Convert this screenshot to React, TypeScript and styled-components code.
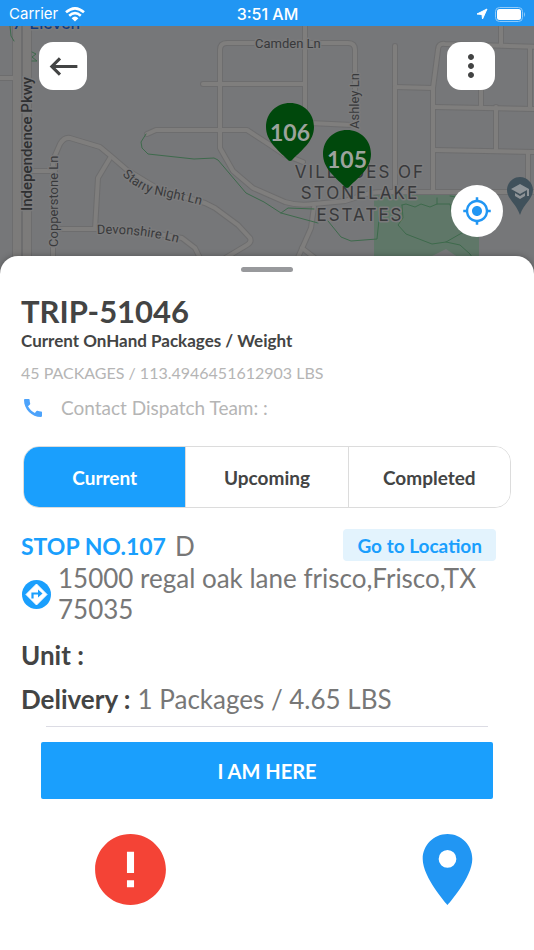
import React, { useState } from "react";
import styled, { createGlobalStyle } from "styled-components";
import {
  MdCall,
  MdError,
  MdKeyboardBackspace,
  MdLocationOn,
  MdMoreVert,
  MdMyLocation,
} from "react-icons/md";

const BLUE = "#1a9ffd";
const INK = "#434444";

const GlobalStyle = createGlobalStyle`
  *, *::before, *::after { box-sizing: border-box; }
  body { margin: 0; background: #fff; font-family: Lato, sans-serif; color: ${INK}; }
  h1, h2, p, dl, dd, dt { margin: 0; }
  button { border: 0; padding: 0; font: inherit; color: inherit; cursor: pointer; }
`;

const Screen = styled.div`
  display: flex;
  flex-direction: column;
  min-height: 100vh;
  background: #fff;
`;

const StatusBar = styled.header`
  display: grid;
  grid-template-columns: 1fr auto 1fr;
  align-items: center;
  height: 26px;
  padding: 2px 8px 0 9px;
  background: #2196f3;
  color: #fff;
  font: 400 15px/24px Inter, sans-serif;
`;

const StatusGroup = styled.div<{ $end?: boolean }>`
  display: flex;
  align-items: center;
  gap: 7px;
  justify-content: ${(p) => (p.$end ? "flex-end" : "flex-start")};
`;

const Clock = styled.time`
  font-size: 16px;
  font-weight: 500;
`;

const MapArea = styled.section`
  position: relative;
  height: 250px;
  background: #767779;
  overflow: hidden;
`;

const MapDrawing = styled.svg`
  position: absolute;
  inset: 0;
  width: 100%;
  height: 100%;
`;

const MapControls = styled.div`
  position: relative;
  display: flex;
  justify-content: space-between;
  padding: 16px 39px;
`;

const SquareButton = styled.button`
  display: grid;
  place-items: center;
  width: 48px;
  height: 48px;
  border-radius: 14px;
  background: #fff;
  color: ${INK};
`;

const LocateButton = styled.button`
  position: absolute;
  right: 31px;
  bottom: 39px;
  display: grid;
  place-items: center;
  width: 52px;
  height: 52px;
  border-radius: 50%;
  background: #fff;
  color: #2196f3;
`;

const Sheet = styled.main`
  position: relative;
  flex: 1;
  display: flex;
  flex-direction: column;
  margin-top: -20px;
  padding: 11px 21px 36px;
  border-radius: 18px 18px 0 0;
  background: #fff;
  box-shadow: 0 0 6px rgba(0, 0, 0, 0.3);
`;

const Handle = styled.div`
  align-self: center;
  width: 52px;
  height: 5px;
  border-radius: 3px;
  background: #98999c;
`;

const Title = styled.h1`
  margin-top: 21px;
  font-size: 31px;
  font-weight: 700;
  line-height: 36px;
`;

const Subtitle = styled.h2`
  margin-top: 1px;
  font-size: 17px;
  font-weight: 700;
  line-height: 22px;
`;

const Totals = styled.p`
  margin-top: 9px;
  font-size: 16px;
  line-height: 24px;
  color: #b5b5b5;
`;

const Contact = styled.p`
  display: flex;
  align-items: center;
  gap: 16px;
  margin-top: 11px;
  font-size: 19px;
  line-height: 24px;
  color: #b5b5b5;

  svg { color: #4da3fb; }
`;

const Tabs = styled.div`
  display: flex;
  height: 62px;
  margin: 26px 2px 0;
  border: 1px solid #dcdcdc;
  border-radius: 16px;
  overflow: hidden;
`;

const Tab = styled.button<{ $active: boolean }>`
  flex: 1;
  background: ${(p) => (p.$active ? BLUE : "#fff")};
  color: ${(p) => (p.$active ? "#fff" : INK)};
  font-size: 19px;
  font-weight: 700;

  & + & { border-left: 1px solid #dcdcdc; }
`;

const StopRow = styled.div`
  display: flex;
  align-items: center;
  gap: 9px;
  margin: 21px 17px 0 0;
  height: 34px;
`;

const StopName = styled.strong`
  color: ${BLUE};
  font-size: 23px;
  font-weight: 700;
`;

const StopKind = styled.span`
  flex: 1;
  font-size: 26px;
  color: #777;
`;

const GoButton = styled.button`
  align-self: flex-start;
  height: 32px;
  padding: 0 14px;
  border-radius: 4px;
  background: #e3f3fd;
  color: ${BLUE};
  font-size: 19px;
  font-weight: 700;
`;

const Address = styled.div`
  display: flex;
  align-items: center;
  gap: 7px;
  padding-left: 1px;
  font-size: 26px;
  line-height: 31px;
  color: #777;

  svg { flex: none; }
`;

const Details = styled.dl`
  display: flex;
  flex-direction: column;
  gap: 12px;
  margin-top: 14px;
  font-size: 26px;
  line-height: 32px;
`;

const Detail = styled.div`
  display: flex;
  gap: 7px;

  dt { font-weight: 700; }
  dd { color: #777; }
`;

const Divider = styled.hr`
  align-self: stretch;
  height: 1px;
  margin: 11px 25px 0;
  border: 0;
  background: #dcdce4;
`;

const PrimaryButton = styled.button`
  height: 57px;
  margin: 15px 20px 0;
  border-radius: 2px;
  background: ${BLUE};
  color: #fff;
  font-size: 20px;
  font-weight: 700;
`;

const Actions = styled.div`
  display: flex;
  justify-content: space-between;
  margin-top: 28px;
  padding: 0 23px 0 67px;
`;

const IconButton = styled.button<{ $color: string }>`
  display: grid;
  background: none;
  color: ${(p) => p.$color};
`;

const MapLabel = styled.text`
  font: 400 13px Roboto, sans-serif;
  fill: #38393b;
  stroke: #7b7b7c;
  stroke-width: 3px;
  stroke-linejoin: round;
  paint-order: stroke;
`;

const AvenueLabel = styled(MapLabel)`
  font-size: 15px;
  font-weight: 500;
  fill: #2f3032;
`;

const ShopLabel = styled(MapLabel)`
  font: 500 16px Inter, sans-serif;
  fill: #123a7c;
`;

const DistrictLabel = styled(MapLabel)`
  font: 400 17px Inter, sans-serif;
  letter-spacing: 2px;
`;

const PinNumber = styled.text`
  font: 700 23px Lato, sans-serif;
  fill: #9da39d;
`;

const ROADS = [
  "M0 78H16",
  "M31 171H55",
  "M220 130V50Q220 43 227 43H348Q355 43 355 50V124",
  "M203 84H305",
  "M305 20V112L310 123L352 125",
  "M147 134L156 130H247L267 143L285 155L303 162",
  "M220 130V148L233 171L253 188L285 202Q298 206 314 204L345 201L370 193Q376 192 384 192H540",
  "M395 46V192",
  "M395 87L433 88",
  "M540 47L445 44Q438 43 438 50L433 88V192",
  "M501 20V45",
  "M481 46V107",
  "M434 107L540 109",
  "M496 107V150",
  "M434 150L540 152",
  "M530 48V107",
  "M528 152V192",
  "M314 207L311 228L296 262",
  "M302 248L320 262",
  "M53 262V160L60 144Q64 137 70 138L100 147L112 157L127 170L160 190L205 203L215 208L238 225L250 238Q252 242 247 245L222 260",
  "M110 158L98 178L95 229",
  "M53 229H95L135 230L182 238L195 248L202 262",
];

const TRAILS = [
  "M10 26L11 36L14 41M32 52L36 54L32 57L37 61H32",
  "M146 134L141 142L142 148L148 154L194 159L214 158L218 160L246 193L264 202L281 213L318 223",
  "M281 213L288 208L314 209M328 221L341 237L351 241L377 239L380 210",
  "M402 205L406 204L415 207L421 204L430 207L437 204H450L452 214",
  "M402 205L403 218L398 225L406 234L432 244L446 242L460 234L472 228",
  "M446 242L460 245L470 254L474 260",
  "M437 198V204M450 196L462 198",
];

function MapPin({ x, y, label }: { x: number; y: number; label: string }) {
  return (
    <g transform={`translate(${x} ${y})`}>
      <path
        d="M0 0C-13.500 0-24 10-24 24C-24 38-12 47-3 56Q0 60 3 56C12 47 24 38 24 24C24 10 13.500 0 0 0Z"
        fill="#00480c"
      />
      <PinNumber x="0" y="38" textAnchor="middle">
        {label}
      </PinNumber>
    </g>
  );
}

function StreetMap() {
  return (
    <MapDrawing viewBox="0 26 534 250" preserveAspectRatio="xMidYMid slice" aria-label="Street map">
      <rect x="-400" y="0" width="1400" height="400" fill="#767779" />
      <path d="M374 194H479V280H374Z" fill="#5f7768" />
      <path d="M428 258L446 249L462 260Z" fill="#767779" />
      <g fill="none" strokeLinecap="round" strokeLinejoin="round">
        {ROADS.map((d) => (
          <path key={d} d={d} stroke="#6d6d6e" strokeWidth="6" />
        ))}
        <path d="M17 20V280M27 20V280" stroke="#6d6d6e" strokeWidth="10" />
        {ROADS.map((d) => (
          <path key={d} d={d} stroke="#7f7e7d" strokeWidth="4" />
        ))}
        <path d="M17 20V280M27 20V280" stroke="#7c7b7a" strokeWidth="8" />
        {TRAILS.map((d) => (
          <path key={d} d={d} stroke="#3e6a4c" strokeWidth="1" />
        ))}
      </g>
      <defs>
        <path id="starry" d="M122 175Q138 191 158 195T212 208" />
        <path id="devonshire" d="M97 234Q140 232 186 245" />
      </defs>
      <ShopLabel x="13" y="29">7-Eleven</ShopLabel>
      <MapLabel x="255" y="48">Camden Ln</MapLabel>
      <MapLabel transform="translate(359 129) rotate(-90)">Ashley Ln</MapLabel>
      <AvenueLabel transform="translate(32 211) rotate(-90)">Independence Pkwy</AvenueLabel>
      <MapLabel transform="translate(58 247) rotate(-90)">Copperstone Ln</MapLabel>
      <MapLabel>
        <textPath href="#starry">Starry Night Ln</textPath>
      </MapLabel>
      <MapLabel>
        <textPath href="#devonshire">Devonshire Ln</textPath>
      </MapLabel>
      <DistrictLabel x="360" y="178" textAnchor="middle">VILLAGES OF</DistrictLabel>
      <DistrictLabel x="360" y="199" textAnchor="middle">STONELAKE</DistrictLabel>
      <DistrictLabel x="360" y="221" textAnchor="middle">ESTATES</DistrictLabel>
      <MapPin x={290} y={103} label="106" />
      <MapPin x={347} y={130} label="105" />
      <g transform="translate(520 177)">
        <path d="M0 0C-7 0-13 6-13 13C-13 22-4 26 0 38C4 26 13 22 13 13C13 6 7 0 0 0Z" fill="#40515b" />
        <path d="M0 7L-9 12L0 17L7 13V19H9V12ZM-5 16V19L0 22L5 19V16L0 19Z" fill="#8e9498" />
      </g>
    </MapDrawing>
  );
}

function WifiIcon() {
  return (
    <svg width="20" height="15" viewBox="0 0 20 15" fill="none" stroke="#fff" strokeWidth="2.600" aria-hidden="true">
      <path d="M1 5.300Q10-2.600 19 5.300M4.200 8.700Q10 3.700 15.800 8.700" />
      <path d="M6.600 11.200Q10 8 13.400 11.200L10 14.600Z" fill="#fff" stroke="none" />
    </svg>
  );
}

function LocationArrow() {
  return (
    <svg width="12" height="12" viewBox="0 0 12 12" fill="#fff" stroke="#fff" strokeLinejoin="round" aria-hidden="true">
      <path d="M11 1L1 6L6 6.500L6.500 11Z" />
    </svg>
  );
}

function BatteryIcon() {
  return (
    <svg width="31" height="15" viewBox="0 0 31 15" aria-hidden="true">
      <rect x="0.500" y="0.500" width="27" height="14" rx="4" fill="none" stroke="#90cbf9" />
      <rect x="2" y="2" width="24" height="11" rx="2.500" fill="#fff" />
      <path d="M29 5Q31 7.500 29 10Z" fill="#90cbf9" />
    </svg>
  );
}

function DirectionIcon() {
  return (
    <svg width="29" height="29" viewBox="0 0 29 29" aria-hidden="true">
      <circle cx="14.500" cy="14.500" r="14.500" fill={BLUE} />
      <path d="M14.500 4L25 14.500L14.500 25L4 14.500Z" fill="#fff" stroke="#fff" strokeLinejoin="round" />
      <path d="M10.500 18.500V13.500H17" fill="none" stroke={BLUE} strokeWidth="2.200" />
      <path d="M16 9.500L20.500 13.500L16 17.500Z" fill={BLUE} />
    </svg>
  );
}

const TABS = ["Current", "Upcoming", "Completed"];

export default function App() {
  const [active, setActive] = useState("Current");

  return (
    <Screen>
      <GlobalStyle />
      <StatusBar>
        <StatusGroup>
          Carrier
          <WifiIcon />
        </StatusGroup>
        <Clock>3:51 AM</Clock>
        <StatusGroup $end>
          <LocationArrow />
          <BatteryIcon />
        </StatusGroup>
      </StatusBar>

      <MapArea>
        <StreetMap />
        <MapControls>
          <SquareButton aria-label="Back">
            <MdKeyboardBackspace size={37} />
          </SquareButton>
          <SquareButton aria-label="More options">
            <MdMoreVert size={36} />
          </SquareButton>
        </MapControls>
        <LocateButton aria-label="My location">
          <MdMyLocation size={30} />
        </LocateButton>
      </MapArea>

      <Sheet>
        <Handle />
        <Title>TRIP-51046</Title>
        <Subtitle>Current OnHand Packages / Weight</Subtitle>
        <Totals>45 PACKAGES / 113.4946451612903 LBS</Totals>
        <Contact>
          <MdCall size={24} />
          Contact Dispatch Team: :
        </Contact>

        <Tabs role="tablist">
          {TABS.map((name) => (
            <Tab
              key={name}
              role="tab"
              aria-selected={name === active}
              $active={name === active}
              onClick={() => setActive(name)}
            >
              {name}
            </Tab>
          ))}
        </Tabs>

        <StopRow>
          <StopName>STOP NO.107</StopName>
          <StopKind>D</StopKind>
          <GoButton>Go to Location</GoButton>
        </StopRow>
        <Address>
          <DirectionIcon />
          <p>15000 regal oak lane frisco,Frisco,TX 75035</p>
        </Address>

        <Details>
          <Detail>
            <dt>Unit :</dt>
            <dd />
          </Detail>
          <Detail>
            <dt>Delivery :</dt>
            <dd>1 Packages / 4.65 LBS</dd>
          </Detail>
        </Details>

        <Divider />
        <PrimaryButton>I AM HERE</PrimaryButton>

        <Actions>
          <IconButton aria-label="Report a problem" $color="#f44336">
            <MdError size={85} />
          </IconButton>
          <IconButton aria-label="Show on map" $color="#2196f3">
            <MdLocationOn size={85} />
          </IconButton>
        </Actions>
      </Sheet>
    </Screen>
  );
}
